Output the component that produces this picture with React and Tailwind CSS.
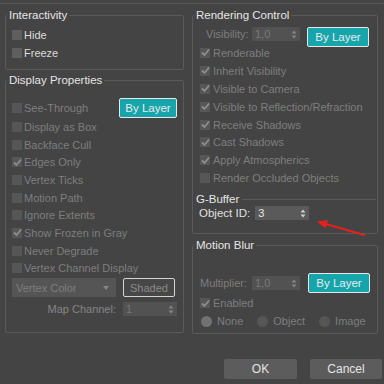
import React from 'react';

const font = { fontFamily: '"Liberation Sans", Arial, sans-serif' };

function Box({ checked, enabled }) {
    return (
        <span
            className={`flex h-[10px] w-[10px] shrink-0 items-center justify-center ${enabled ? 'bg-[#5f5f5f]' : 'bg-[#565656]'}`}
        >
            {checked && (
                <svg width="9" height="9" viewBox="0 0 9 9">
                    <path d="M1 4.5 L3.5 7 L8 1.5" fill="none" stroke="#8e8e8e" strokeWidth="1.8" />
                </svg>
            )}
        </span>
    );
}

function Check({ label, checked, enabled, gap = 'gap-[2px]', h = 'h-[17.7px]' }) {
    return (
        <div className={`flex items-center ${gap} ${h}`}>
            <Box checked={checked} enabled={enabled} />
            <span className={enabled ? 'text-[#dcdcdc]' : 'text-[#7e7e7e]'}>{label}</span>
        </div>
    );
}

function Arrows({ color = '#8a8a8a' }) {
    return (
        <svg width="6" height="9" viewBox="0 0 6 9">
            <path d="M0.5 3.5 L3 0.5 L5.5 3.5 Z" fill={color} />
            <path d="M0.5 5.5 L3 8.5 L5.5 5.5 Z" fill={color} />
        </svg>
    );
}

function Spinner({ value, w, light }) {
    return (
        <div
            className={`flex h-[14px] items-center justify-between pl-[3px] pr-[3px] ${w} ${light ? 'bg-[#5a5a5a] text-[#e6e6e6]' : 'bg-[#525252] text-[#787878]'}`}
        >
            <span>{value}</span>
            <Arrows color={light ? '#d0d0d0' : '#858585'} />
        </div>
    );
}

function ByLayer({ w }) {
    return (
        <button className={`h-[20px] ${w} rounded-[2px] border border-[#e8e8e8] bg-[#16a5aa] text-[11.5px] text-[#eaeaea]`}>
            By Layer
        </button>
    );
}

function Group({ title, h, children, className = '' }) {
    return (
        <fieldset className={`rounded-[2px] border border-[#5a5a5a] ${h} ${className}`}>
            <legend className="ml-[1px] px-[2px] text-[11.5px] leading-[12px] text-[#e6e6e6]">{title}</legend>
            {children}
        </fieldset>
    );
}

function Radio({ label, on }) {
    return (
        <div className="flex items-center gap-[5px]">
            <span className={`h-[11px] w-[11px] rounded-full ${on ? 'bg-[#727272]' : 'bg-[#565656]'}`} />
            <span className="text-[#7e7e7e]">{label}</span>
        </div>
    );
}

export default function App() {
    return (
        <div className="relative h-[384px] w-[384px] overflow-hidden bg-[#444444] text-[11px] leading-[12px]" style={font}>
            <div className="mt-[3px] border-t border-[#5a5a5a]" />
            <div className="flex h-[330px] items-start pt-[5px]">
                {/* left column */}
                <div className="ml-[5px] w-[179px]">
                    <Group title="Interactivity" h="h-[61px]">
                        <div className="pl-[6px] pt-[5px]">
                            <Check label="Hide" enabled h="h-[18px]" />
                            <Check label="Freeze" enabled h="h-[18px]" />
                        </div>
                    </Group>
                    <Group title="Display Properties" h="h-[259px]" className="mt-[4px]">
                        <div className="pl-[6px] pt-[12px]">
                            <div className="flex items-center justify-between pr-[6px]">
                                <Check label="See-Through" />
                                <ByLayer w="w-[58px]" />
                            </div>
                            <Check label="Display as Box" />
                            <Check label="Backface Cull" />
                            <Check label="Edges Only" checked />
                            <Check label="Vertex Ticks" />
                            <Check label="Motion Path" />
                            <Check label="Ignore Extents" />
                            <Check label="Show Frozen in Gray" checked />
                            <Check label="Never Degrade" />
                            <Check label="Vertex Channel Display" />
                            <div className="mt-[1px] flex items-center gap-[7px]">
                                <div className="flex h-[19px] w-[104px] items-center justify-between bg-[#555555] pl-[4px] pr-[7px] text-[#7e7e7e]">
                                    <span>Vertex Color</span>
                                    <svg width="6" height="4" viewBox="0 0 6 4">
                                        <path d="M0 0 L6 0 L3 4 Z" fill="#858585" />
                                    </svg>
                                </div>
                                <div className="flex h-[19px] w-[52px] items-center justify-center rounded-[2px] border border-[#d4d4d4] bg-[#474747] text-[#8a8a8a]">
                                    Shaded
                                </div>
                            </div>
                            <div className="mt-[5px] flex items-center justify-end gap-[7px] pr-[6px]">
                                <span className="text-[#858585]">Map Channel:</span>
                                <Spinner value="1" w="w-[54px]" />
                            </div>
                        </div>
                    </Group>
                </div>

                {/* right column */}
                <div className="ml-[8px] w-[186px]">
                    <Group title="Rendering Control" h="h-[225px]">
                        <div className="pt-[6px]">
                            <div className="flex h-[17px] items-start pl-[13px]">
                                <span className="mt-[1px] w-[46px] text-[#7e7e7e]">Visibility:</span>
                                <Spinner value="1,0" w="w-[48px]" />
                                <div className="ml-[7px]">
                                    <ByLayer w="w-[62px]" />
                                </div>
                            </div>
                            <div className="pl-[7px]">
                                <Check label="Renderable" checked gap="gap-[3px]" h="h-[17.9px]" />
                                <Check label="Inherit Visibility" checked gap="gap-[3px]" h="h-[17.9px]" />
                                <Check label="Visible to Camera" checked gap="gap-[3px]" h="h-[17.9px]" />
                                <Check label="Visible to Reflection/Refraction" checked gap="gap-[3px]" h="h-[17.9px]" />
                                <Check label="Receive Shadows" checked gap="gap-[3px]" h="h-[17.9px]" />
                                <Check label="Cast Shadows" checked gap="gap-[3px]" h="h-[17.9px]" />
                                <Check label="Apply Atmospherics" checked gap="gap-[3px]" h="h-[17.9px]" />
                                <Check label="Render Occluded Objects" gap="gap-[3px]" h="h-[17.9px]" />
                            </div>

                            {/* G-Buffer section */}
                            <div className="mt-[6px] flex h-[12px] items-center gap-[3px] pl-[3px] pr-[1px]">
                                <span className="text-[11.5px] text-[#e6e6e6]">G-Buffer</span>
                                <div className="flex-1 border-t border-[#5a5a5a]" />
                            </div>
                            <div className="mt-[1px] flex items-center gap-[5px] pl-[6px]">
                                <span className="text-[11.5px] text-[#e0e0e0]">Object ID:</span>
                                <Spinner value="3" w="w-[54px]" light />
                            </div>
                        </div>
                    </Group>
                    <Group title="Motion Blur" h="h-[95px]" className="mt-[5px]">
                        <div className="pl-[7px] pt-[22px]">
                            <div className="flex h-[20px] items-center">
                                <span className="w-[52px] text-[#7e7e7e]">Multiplier:</span>
                                <Spinner value="1,0" w="w-[48px]" />
                                <div className="ml-[8px]">
                                    <ByLayer w="w-[62px]" />
                                </div>
                            </div>
                            <div className="mt-[1px]">
                                <Check label="Enabled" checked gap="gap-[3px]" h="h-[18px]" />
                            </div>
                            <div className="flex h-[18px] items-center gap-[14px] pl-[1px]">
                                <Radio label="None" on />
                                <Radio label="Object" />
                                <Radio label="Image" />
                            </div>
                        </div>
                    </Group>
                </div>
            </div>

            <div className="mt-[25px] flex justify-end gap-[13px] pr-[2px]">
                <button className="h-[20px] w-[73px] rounded-[2px] bg-[#5c5c5c] text-[12px] text-[#e4e4e4]">OK</button>
                <button className="h-[20px] w-[72px] rounded-[2px] bg-[#5c5c5c] text-[12px] text-[#e4e4e4]">Cancel</button>
            </div>

            {/* red arrow pointing at Object ID */}
            <svg className="absolute left-[314px] top-[216px]" width="54" height="24" viewBox="0 0 54 24">
                <path d="M50 19 L12 8" stroke="#e3221c" strokeWidth="2.2" strokeLinecap="round" />
                <path d="M3 5.5 L14 4 L11.5 12.5 Z" fill="#e3221c" />
            </svg>
        </div>
    );
}
